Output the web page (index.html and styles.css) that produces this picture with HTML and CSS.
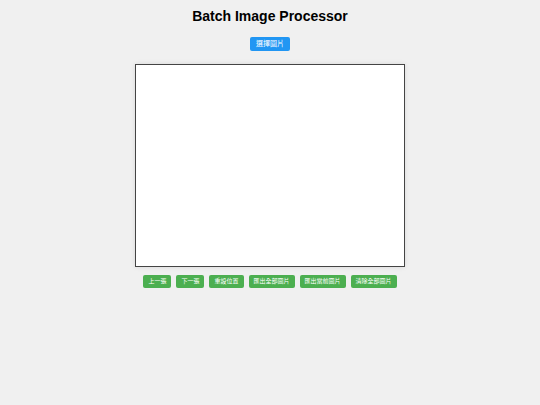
FILE: index.html
```html
<!DOCTYPE html>
<html lang="zh-Hant">
<head>
  <meta charset="UTF-8">
  <meta name="viewport" content="width=device-width, initial-scale=1.0">
  <title>Batch Image Processor</title>
  <link rel="stylesheet" href="styles.css">
</head>
<body>
  <h1>Batch Image Processor</h1>

  <button type="button" class="upload-btn">選擇圖片</button>

  <!-- Preview area -->
  <canvas class="preview" width="800" height="600"></canvas>

  <div class="controls">
    <button type="button">上一張</button>
    <button type="button">下一張</button>
    <button type="button">重設位置</button>
    <button type="button">匯出全部圖片</button>
    <button type="button">匯出當前圖片</button>
    <button type="button">清除全部圖片</button>
  </div>
</body>
</html>
```

FILE: styles.css
```css
body {
  display: flex;
  flex-direction: column;
  align-items: center;
  margin: 0;
  padding: 8px;
  font-family: "Liberation Sans", Arial, "Noto Sans CJK TC", sans-serif;
  background: #f0f0f0;
}

h1 {
  margin: 0 0 13px;
  font-size: 14px;
  line-height: 16px;
  color: #000;
}

button {
  border: none;
  border-radius: 2px;
  color: #fff;
  font-family: inherit;
  cursor: pointer;
}

.upload-btn {
  padding: 2px 6px;
  font-size: 7px;
  line-height: 10px;
  background: #2196f3;
}

/* Image preview */
.preview {
  box-sizing: border-box;
  width: 50vw;
  aspect-ratio: 4 / 3;
  margin: 13px 0 8px;
  border: 1px solid #444;
  background: #fff;
  box-shadow: 0 0 5px rgba(0, 0, 0, 0.1);
}

/* Button row below the canvas */
.controls {
  display: flex;
  flex-wrap: wrap;
  justify-content: center;
  gap: 5px;
}

.controls button {
  padding: 2px 5px;
  font-size: 6px;
  line-height: 9px;
  background: #4caf50;
}
```
